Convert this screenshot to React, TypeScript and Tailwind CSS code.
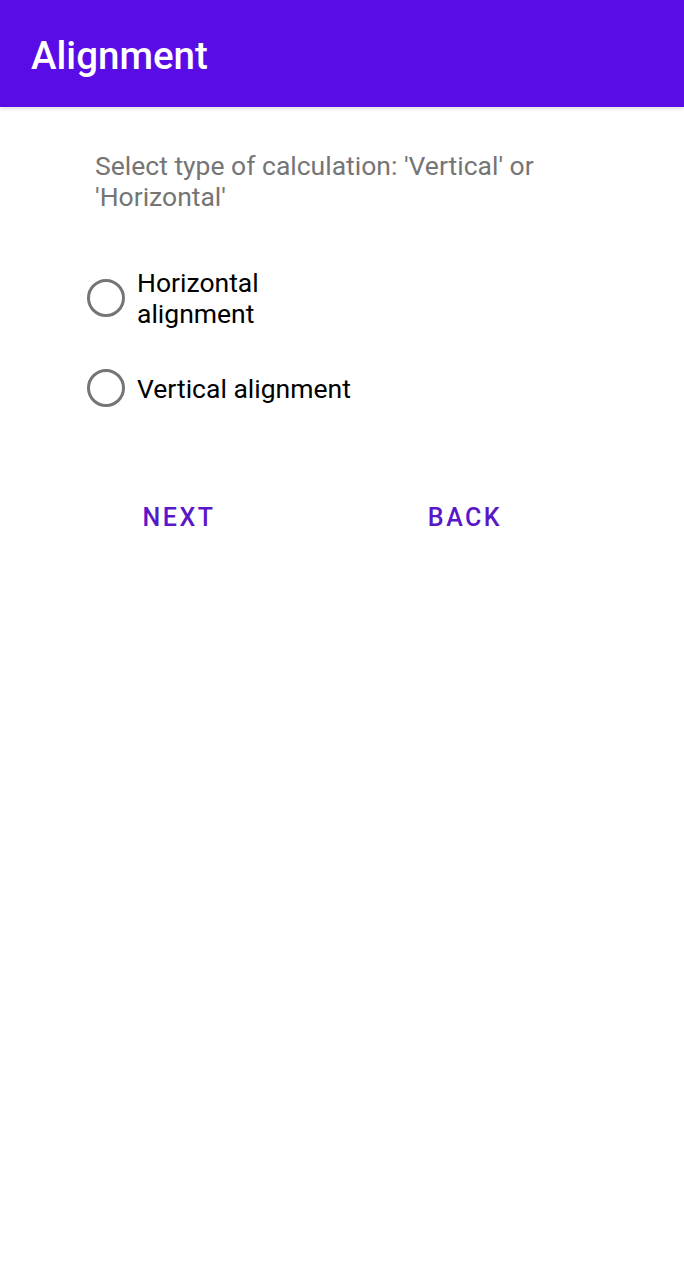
import React, { useState } from 'react';

const font = { fontFamily: 'Roboto, "Noto Sans", sans-serif' };

const Radio: React.FC<{ label: string; checked: boolean; onSelect: () => void }> = ({
  label,
  checked,
  onSelect
}) => (
  <button onClick={onSelect} className="flex items-center text-left">
    <span className="flex h-[38px] w-[38px] shrink-0 items-center justify-center rounded-full border-[3.5px] border-[#757575]">
      {checked && <span className="h-[19px] w-[19px] rounded-full bg-[#5b12d0]" />}
    </span>
    <span className="ml-[12px] w-[222px] text-[26.5px] leading-[31px] text-black">{label}</span>
  </button>
);

export default function App() {
  const [choice, setChoice] = useState<string | null>(null);

  return (
    <div className="min-h-[1280px] w-[684px] bg-white" style={font}>
      <header className="relative h-[107px] bg-[#5a0ce6] pl-[31px] pt-[34px] shadow-[0_2px_4px_rgba(0,0,0,0.12)]">
        <h1 className="text-[38.5px] font-medium leading-[44px] text-white">Alignment</h1>
      </header>

      <p className="ml-[95px] mt-[43px] w-[465px] text-[26.5px] leading-[31px] text-[#757575]">
        Select type of calculation: 'Vertical' or 'Horizontal'
      </p>

      <div className="ml-[87px] mt-[55px] flex flex-col gap-[40px]">
        <Radio
          label="Horizontal alignment"
          checked={choice === 'h'}
          onSelect={() => setChoice('h')}
        />
        <Radio
          label="Vertical alignment"
          checked={choice === 'v'}
          onSelect={() => setChoice('v')}
        />
      </div>

      <div className="mt-[96px] flex pl-[109px] gap-[146px]">
        <button className="w-[140px] text-center text-[25px] font-medium uppercase leading-[30px] tracking-[0.1em] text-[#5a17c9]">
          Next
        </button>
        <button className="w-[140px] text-center text-[25px] font-medium uppercase leading-[30px] tracking-[0.1em] text-[#5a17c9]">
          Back
        </button>
      </div>
    </div>
  );
}
